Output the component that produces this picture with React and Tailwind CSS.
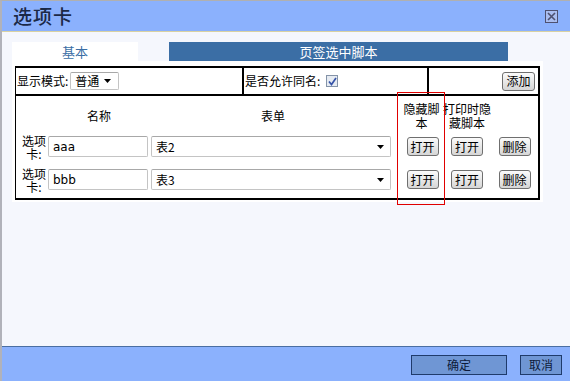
import React from "react";

const cjk = { fontFamily: '"Noto Sans CJK SC", "Liberation Sans", sans-serif' };

function Btn({ children }) {
  return (
    <div className="w-[32px] h-[19px] flex items-center justify-center border border-[#6f6f6f] rounded-[3px] bg-gradient-to-b from-[#fbfbfb] to-[#d6d6d6] text-[12px] leading-none text-black">
      {children}
    </div>
  );
}

function Arrow() {
  return (
    <svg width="7" height="4" viewBox="0 0 7 4" className="shrink-0">
      <path d="M0 0H7L3.5 4Z" fill="#000" />
    </svg>
  );
}

function DataRow({ name, form }) {
  return (
    <div className="grid grid-cols-[32px_102px_246px_47px_48px_47px] h-[33px] items-center">
      <div className="pl-[4px] text-center text-[12px] leading-[13px] text-black">选项卡:</div>
      <div className="h-[21px] w-[100px] border border-[#c4c4c4] border-t-[#a8a8a8] rounded-[2px] bg-white flex items-center pl-[4px] text-[12px] text-black" style={{ fontFamily: '"DejaVu Sans", sans-serif' }}>
        {name}
      </div>
      <div className="ml-[1px] h-[21px] w-[240px] border border-[#c4c4c4] border-t-[#a8a8a8] rounded-[2px] bg-white flex items-center justify-between pl-[4px] pr-[6px] text-[12px] text-black">
        <span>{form}</span>
        <Arrow />
      </div>
      <div className="flex justify-center pl-[6px]"><Btn>打开</Btn></div>
      <div className="flex justify-center"><Btn>打开</Btn></div>
      <div className="flex justify-center"><Btn>删除</Btn></div>
    </div>
  );
}

export default function App() {
  return (
    <div className="w-[570px] h-[381px] flex flex-col border-l-2 border-l-[#b1b2ba] border-t border-t-[#b0b0b0] bg-[#f5f7fd] relative overflow-hidden" style={cjk}>
      {/* title bar */}
      <div className="h-[31px] shrink-0 bg-[#8bb1fd] border-b border-b-[#d9d2a2] flex items-center justify-between pl-[11px] pr-[12px]">
        <span className="text-[19px] font-medium text-[#1b2947] tracking-[1px]">选项卡</span>
        <div className="w-[13px] h-[13px] border border-[#4d5070] bg-[#a9bdf0] flex items-center justify-center">
          <svg width="9" height="9" viewBox="0 0 9 9">
            <path d="M1 1L8 8M8 1L1 8" stroke="#4d5070" strokeWidth="1.6" />
          </svg>
        </div>
      </div>

      {/* body */}
      <div className="flex-1 pl-[10px] pt-[10px]">
        <div className="flex h-[19px] gap-[31px] text-[13px]">
          <div className="w-[126px] bg-white text-[#3a6ea5] flex items-center justify-center">基本</div>
          <div className="w-[339px] bg-[#3b6ea5] text-white flex items-center justify-center">页签选中脚本</div>
        </div>

        <div className="w-[531px] h-[141px] bg-white pl-[3px] pt-[5px]">
          <div className="w-[525px] h-[134px] border-2 border-l border-black text-[12px] text-black">
            {/* row 1 */}
            <div className="flex h-[28px] border-b-2 border-black">
              <div className="w-[228px] border-r-2 border-black flex items-center pl-[1px] gap-[2px]">
                <span>显示模式:</span>
                <div className="h-[18px] w-[49px] border border-[#c4c4c4] border-t-[#a8a8a8] rounded-[2px] bg-white flex items-center justify-between pl-[4px] pr-[7px]">
                  <span>普通</span>
                  <Arrow />
                </div>
              </div>
              <div className="w-[185px] border-r-2 border-black flex items-center pl-[1px] gap-[6px]">
                <span>是否允许同名:</span>
                <div className="w-[12px] h-[12px] border border-[#8493a8] bg-[#e6ebf2] flex items-center justify-center">
                  <svg width="9" height="9" viewBox="0 0 9 9">
                    <path d="M1 4.5L3.5 7.5L8 1" stroke="#3553a8" strokeWidth="1.7" fill="none" />
                  </svg>
                </div>
              </div>
              <div className="flex-1 flex items-center justify-end pr-[3px]">
                <div className="w-[33px] h-[19px] flex items-center justify-center border border-[#6f6f6f] rounded-[3px] bg-gradient-to-b from-[#fbfbfb] to-[#d6d6d6]">添加</div>
              </div>
            </div>

            {/* header */}
            <div className="grid grid-cols-[32px_102px_246px_47px_48px_47px] h-[34px] items-center text-center leading-[14px] pt-[5px]">
              <div />
              <div>名称</div>
              <div>表单</div>
              <div className="pl-[4px]">隐藏脚本</div>
              <div>打印时隐藏脚本</div>
              <div />
            </div>

            <DataRow name="aaa" form="表2" />
            <DataRow name="bbb" form="表3" />
          </div>
        </div>
      </div>

      {/* highlight box */}
      <div className="absolute left-[395px] top-[91px] w-[48px] h-[113px] border border-[#e00000] pointer-events-none" />

      {/* footer */}
      <div className="h-[35px] shrink-0 bg-[#8bb1fd] border-t border-t-[#4a6ea2] flex items-center justify-end gap-[13px] pr-[8px] pt-[2px] text-[12px] text-[#0d1a3a]">
        <div className="w-[96px] h-[20px] bg-[#6f96d4] border border-[#1f3b6b] flex items-center justify-center">确定</div>
        <div className="w-[42px] h-[20px] bg-[#6f96d4] border border-[#1f3b6b] flex items-center justify-center">取消</div>
      </div>
    </div>
  );
}
